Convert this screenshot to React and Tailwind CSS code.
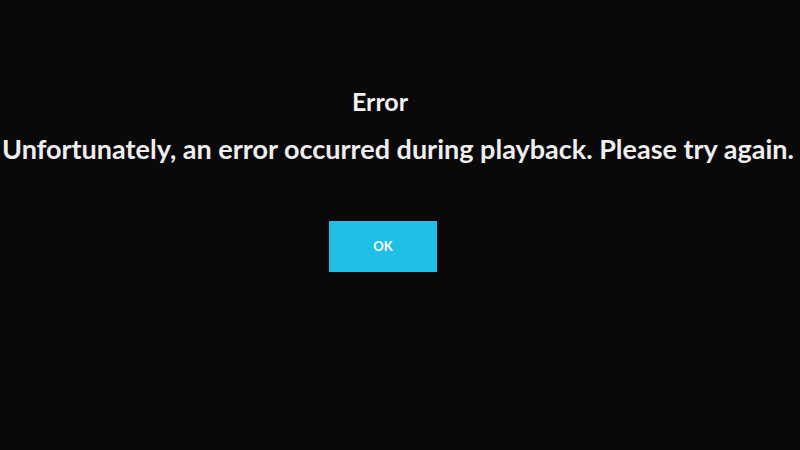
export default function App() {
  return (
    <div className="w-[800px] h-[450px] bg-[#0a0809] overflow-hidden flex flex-col items-center" style={{ fontFamily: 'Lato, sans-serif' }}>
      <h1 className="mt-[85px] ml-[-40px] text-[25px] leading-[32px] font-bold text-[#f2f2f2]">Error</h1>
      <p className="mt-[15px] ml-[-4px] text-[27px] leading-[34px] font-bold text-[#eeeeee] whitespace-nowrap">
        Unfortunately, an error occurred during playback. Please try again.
      </p>
      <button className="mt-[55px] w-[108px] h-[51px] bg-[#1fbfe6] text-white text-[13px] font-bold flex items-center justify-center ml-[-34px]">
        OK
      </button>
    </div>
  );
}
